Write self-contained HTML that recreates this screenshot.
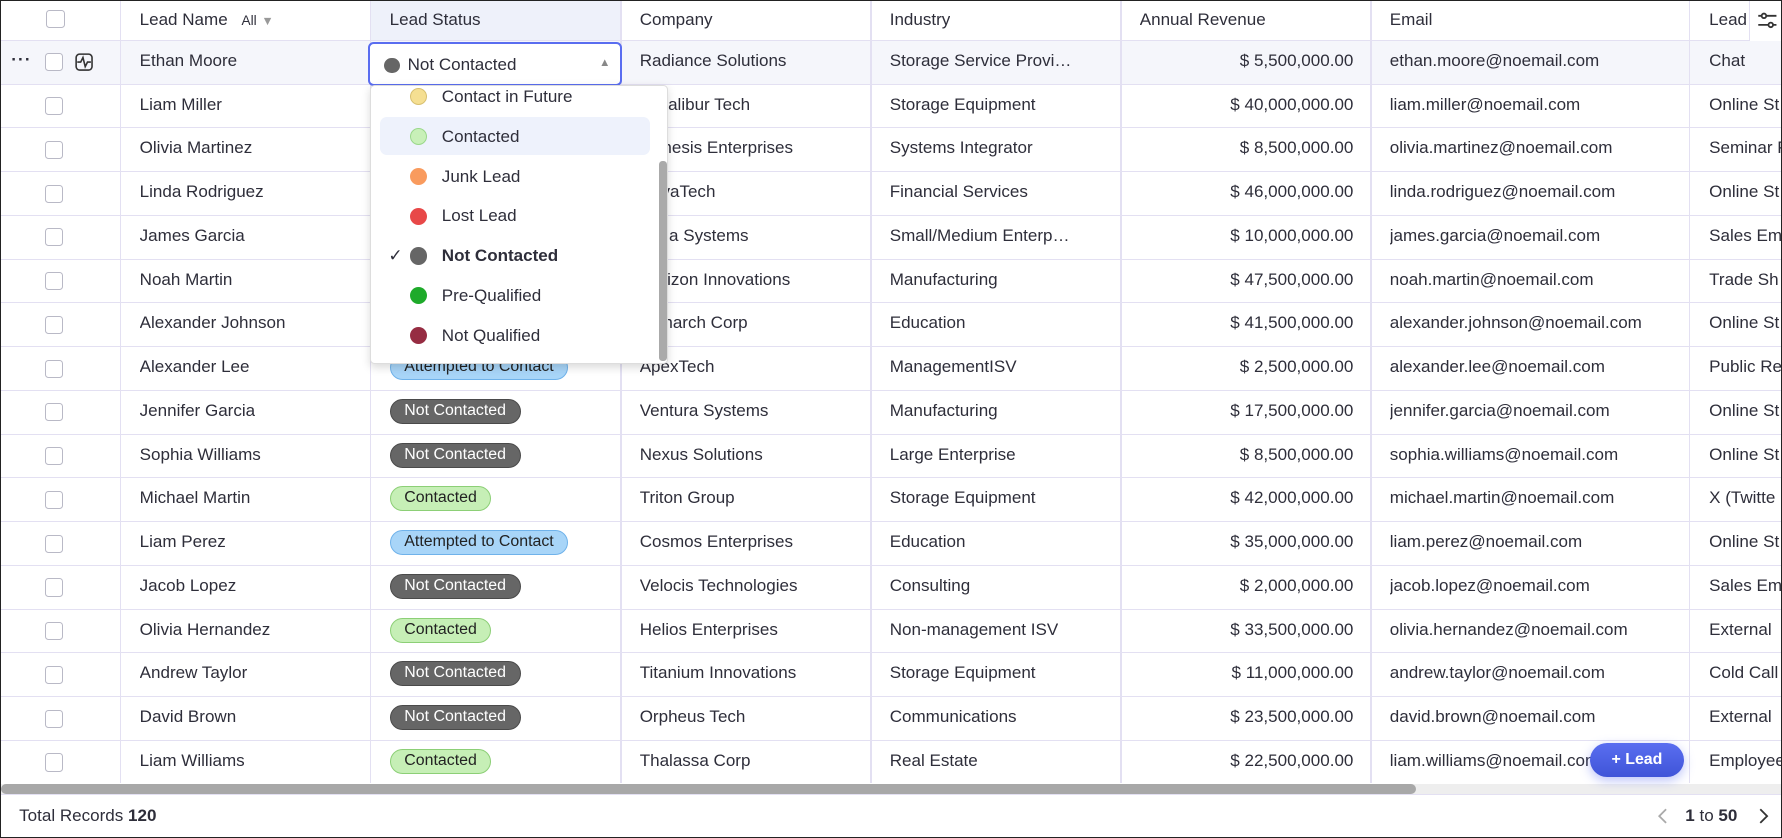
<!DOCTYPE html>
<html><head><meta charset="utf-8"><style>
*{box-sizing:border-box;margin:0;padding:0}
html,body{width:1782px;height:838px;overflow:hidden;background:#fff}
#w{zoom:1.13648;width:1568px;height:737px;position:relative;border:1px solid #222;font-family:"Liberation Sans",sans-serif;color:#2e2e3a;font-size:15px;overflow:hidden}
.vl{position:absolute;top:0;width:1px;height:688px;background:#e3e0f2}
.row{position:absolute;left:0;width:1568px;height:38.5px;border-bottom:1px solid #e3e0f2}
.c{position:absolute;top:0;height:38px;line-height:36px;white-space:nowrap;overflow:hidden}
.cb{position:absolute;left:39px;top:11px;width:16px;height:16px;border:1.5px solid #b9b9c6;border-radius:3px;background:#fff}
.pill{display:inline-block;height:22px;line-height:20px;border-radius:11px;padding:0 12px;font-size:14px;vertical-align:middle}
.nc{background:#666;color:#fff;border:1px solid #4a4a4a}
.ct{background:#c6efb6;border:1px solid #8ccf76;color:#222}
.at{background:#a8d5f8;border:1px solid #6fb2ea;color:#222}
.dd{position:absolute;left:325px;top:74px;width:262px;height:245px;background:#fff;border:1px solid #ddd;border-radius:4px;box-shadow:0 3px 8px rgba(0,0,0,.15);overflow:hidden}
.it{position:absolute;left:0;height:35px;line-height:35px;width:250px;font-size:15px}
.dot{position:absolute;left:34px;top:10px;width:15px;height:15px;border-radius:50%}
.it span.t{position:absolute;left:62px}
</style></head><body><div id="w">
<div style="position:absolute;left:325px;top:0;width:220px;height:35px;background:#eef1fa"></div>
<div style="position:absolute;left:0;top:35px;width:1568px;height:39px;background:#f5f6fb"></div>
<div class="vl" style="left:105px"></div><div class="vl" style="left:325px"></div><div class="vl" style="left:545px"></div><div class="vl" style="left:765px"></div><div class="vl" style="left:985px"></div><div class="vl" style="left:1205px"></div><div class="vl" style="left:1485px"></div>
<div class="row" style="top:0;height:35px">
<div class="cb" style="top:8px;left:40px"></div>
<div class="c" style="left:122px;height:35px;line-height:33px">Lead Name <span style="font-size:12px;margin-left:8px">All</span> <span style="color:#999;font-size:11px">▼</span></div>
<div class="c" style="left:342px;height:35px;line-height:33px">Lead Status</div>
<div class="c" style="left:562px;height:35px;line-height:33px">Company</div>
<div class="c" style="left:782px;height:35px;line-height:33px">Industry</div>
<div class="c" style="left:1002px;height:35px;line-height:33px">Annual Revenue</div>
<div class="c" style="left:1222px;height:35px;line-height:33px">Email</div>
<div class="c" style="left:1503px;height:35px;line-height:33px">Lead</div>
<div style="position:absolute;left:1538px;top:0;width:30px;height:35px;background:#fff;border-left:1px solid #e3e0f2"><svg width="20" height="20" viewBox="0 0 20 20" style="position:absolute;left:5px;top:7px" stroke="#333" stroke-width="1.6" fill="none"><path d="M2 6h16M2 14h16"/><circle cx="7" cy="6" r="2" fill="#fff"/><circle cx="13" cy="14" r="2" fill="#fff"/></svg></div>
</div>
<div id="rows"></div>
<div style="position:absolute;left:323px;top:36px;width:223px;height:39px;border:2px solid #5a6df0;border-radius:5px;background:#fff">
<span style="position:absolute;left:12px;top:12px;width:14px;height:14px;border-radius:50%;background:#666"></span>
<span style="position:absolute;left:33px;top:0;line-height:37px">Not Contacted</span>
<span style="position:absolute;right:8px;top:0;line-height:35px;font-size:10px;color:#888">▲</span></div>
<div class="dd">
<div style="position:absolute;left:8px;top:27px;width:237px;height:34px;background:#eef2fc;border-radius:6px"></div>
<div class="it" style="top:-8px"><span class="dot" style="background:#f5df92;border:1px solid #d8c070"></span><span class="t">Contact in Future</span></div>
<div class="it" style="top:27px"><span class="dot" style="background:#c8f0b8;border:1px solid #9ad88a"></span><span class="t">Contacted</span></div>
<div class="it" style="top:62px"><span class="dot" style="background:#f99b5e"></span><span class="t">Junk Lead</span></div>
<div class="it" style="top:97px"><span class="dot" style="background:#e84848"></span><span class="t">Lost Lead</span></div>
<div class="it" style="top:132px"><span style="position:absolute;left:15px;font-size:15px">✓</span><span class="dot" style="background:#666"></span><span class="t" style="font-weight:bold">Not Contacted</span></div>
<div class="it" style="top:167px"><span class="dot" style="background:#1eaa2a"></span><span class="t">Pre-Qualified</span></div>
<div class="it" style="top:202px"><span class="dot" style="background:#962c42"></span><span class="t">Not Qualified</span></div>
<div style="position:absolute;left:253px;top:66px;width:7px;height:176px;background:#aaa;border-radius:3px"></div>
</div>
<div style="position:absolute;left:0;top:689px;width:1568px;height:9px;background:#eee"></div>
<div style="position:absolute;left:0;top:689px;width:1245px;height:9px;background:#a8a8a8;border-radius:5px"></div>
<div style="position:absolute;left:0;top:698px;width:1568px;height:1px;background:#e3e0f2"></div>
<div style="position:absolute;left:16px;top:708px;font-size:15px">Total Records <b>120</b></div>
<svg width="10" height="16" viewBox="0 0 10 16" style="position:absolute;left:1457px;top:709px" fill="none" stroke="#aaa" stroke-width="1.6"><path d="M8 2L2 8l6 6"/></svg>
<div style="position:absolute;left:1482px;top:708px;font-size:15px"><b>1</b> to <b>50</b></div>
<svg width="10" height="16" viewBox="0 0 10 16" style="position:absolute;left:1546px;top:709px" fill="none" stroke="#333" stroke-width="1.6"><path d="M2 2l6 6-6 6"/></svg>
<div style="position:absolute;left:1398px;top:653px;width:83px;height:30px;border-radius:15px;background:linear-gradient(#5a6ef0,#3f54d8);color:#fff;font-weight:bold;font-size:14px;line-height:30px;text-align:center;box-shadow:0 3px 10px rgba(80,100,240,.4)">+ Lead</div>
</div>
<script>
var d=[["Ethan Moore","","Radiance Solutions","Storage Service Provi…","5,500,000.00","ethan.moore@noemail.com","Chat"],
["Liam Miller","","Excalibur Tech","Storage Equipment","40,000,000.00","liam.miller@noemail.com","Online St"],
["Olivia Martinez","","Genesis Enterprises","Systems Integrator","8,500,000.00","olivia.martinez@noemail.com","Seminar P"],
["Linda Rodriguez","","NovaTech","Financial Services","46,000,000.00","linda.rodriguez@noemail.com","Online St"],
["James Garcia","","Vega Systems","Small/Medium Enterp…","10,000,000.00","james.garcia@noemail.com","Sales Em"],
["Noah Martin","","Horizon Innovations","Manufacturing","47,500,000.00","noah.martin@noemail.com","Trade Sh"],
["Alexander Johnson","","Monarch Corp","Education","41,500,000.00","alexander.johnson@noemail.com","Online St"],
["Alexander Lee","at","ApexTech","ManagementISV","2,500,000.00","alexander.lee@noemail.com","Public Re"],
["Jennifer Garcia","nc","Ventura Systems","Manufacturing","17,500,000.00","jennifer.garcia@noemail.com","Online St"],
["Sophia Williams","nc","Nexus Solutions","Large Enterprise","8,500,000.00","sophia.williams@noemail.com","Online St"],
["Michael Martin","ct","Triton Group","Storage Equipment","42,000,000.00","michael.martin@noemail.com","X (Twitte"],
["Liam Perez","at","Cosmos Enterprises","Education","35,000,000.00","liam.perez@noemail.com","Online St"],
["Jacob Lopez","nc","Velocis Technologies","Consulting","2,000,000.00","jacob.lopez@noemail.com","Sales Em"],
["Olivia Hernandez","ct","Helios Enterprises","Non-management ISV","33,500,000.00","olivia.hernandez@noemail.com","External"],
["Andrew Taylor","nc","Titanium Innovations","Storage Equipment","11,000,000.00","andrew.taylor@noemail.com","Cold Call"],
["David Brown","nc","Orpheus Tech","Communications","23,500,000.00","david.brown@noemail.com","External"],
["Liam Williams","ct","Thalassa Corp","Real Estate","22,500,000.00","liam.williams@noemail.com","Employee"]];
var L={nc:"Not Contacted",ct:"Contacted",at:"Attempted to Contact"},h="";
d.forEach(function(r,i){var t=35+i*38.5;h+='<div class="row" style="top:'+t+'px">';
if(i==0)h+='<div class="c" style="left:9px;font-weight:bold;letter-spacing:1px;line-height:34px">···</div><div class="cb" style="top:11px"></div><svg width="16" height="16" viewBox="0 0 16 16" style="position:absolute;left:65px;top:11px" fill="none" stroke="#333" stroke-width="1.4"><rect x="1" y="1" width="14" height="14" rx="3"/><path d="M2 8h3l2-4 2 8 2-4h3"/></svg>';else h+='<div class="cb"></div>';
h+='<div class="c" style="left:122px">'+r[0]+'</div>';
if(r[1])h+='<div class="c" style="left:342px"><span class="pill '+r[1]+'">'+L[r[1]]+'</span></div>';
h+='<div class="c" style="left:562px">'+r[2]+'</div><div class="c" style="left:782px">'+r[3]+'</div><div class="c" style="left:985px;width:205px;text-align:right">$ '+r[4]+'</div><div class="c" style="left:1222px">'+r[5]+'</div><div class="c" style="left:1503px;width:65px">'+r[6]+'</div></div>';});
document.getElementById('rows').innerHTML=h;
</script>
</body></html>
